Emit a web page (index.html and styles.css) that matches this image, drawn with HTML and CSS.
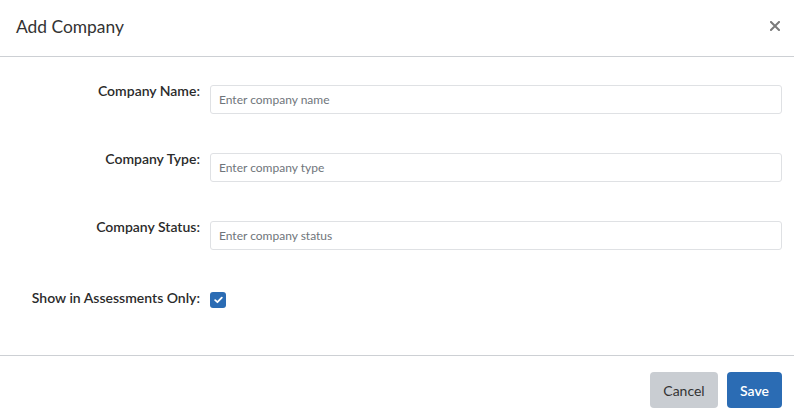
FILE: index.html
```html
<!DOCTYPE html>
<html>
<head>
<meta charset="utf-8">
<link rel="stylesheet" href="styles.css">
</head>
<body>
<div class="modal">
  <div class="modal-header">
    <h1 class="title">Add Company</h1>
    <button class="close" aria-label="Close">
      <svg width="10" height="10" viewBox="0 0 10 10"><path d="M1 1L9 9M9 1L1 9" stroke="#7a7a7a" stroke-width="2" stroke-linecap="square"/></svg>
    </button>
  </div>
  <div class="modal-body">
    <div class="row">
      <label class="label">Company Name:</label>
      <input class="input" type="text" placeholder="Enter company name">
    </div>
    <div class="row">
      <label class="label">Company Type:</label>
      <input class="input" type="text" placeholder="Enter company type">
    </div>
    <div class="row">
      <label class="label">Company Status:</label>
      <input class="input" type="text" placeholder="Enter company status">
    </div>
    <div class="row row-check">
      <label class="label">Show in Assessments Only:</label>
      <span class="checkbox">
        <svg width="9" height="8" viewBox="0 0 9 8"><path d="M1.2 4.2L3.4 6.2L7.8 1.6" fill="none" stroke="#fff" stroke-width="1.8" stroke-linecap="round" stroke-linejoin="round"/></svg>
      </span>
    </div>
  </div>
  <div class="modal-footer">
    <button class="btn btn-cancel">Cancel</button>
    <button class="btn btn-save">Save</button>
  </div>
</div>
</body>
</html>
```

FILE: styles.css
```css
* { box-sizing: border-box; }
html, body {
  margin: 0;
  padding: 0;
  background: #fff;
  font-family: Lato, "Liberation Sans", sans-serif;
  color: #333;
}
.modal {
  width: 794px;
  height: 420px;
  display: flex;
  flex-direction: column;
}
.modal-header {
  height: 57px;
  border-bottom: 1px solid #cdd0d4;
  display: flex;
  align-items: center;
  justify-content: space-between;
  padding: 0 12px 0 16px;
}
.title {
  margin: 0;
  font-size: 17.4px;
  font-weight: 400;
  color: #333;
  margin-top: -3px;
}
.close {
  background: none;
  border: 0;
  padding: 0;
  width: 14px;
  height: 14px;
  display: flex;
  align-items: center;
  justify-content: center;
  margin-top: -4px;
}
.modal-body {
  height: 299px;
  border-bottom: 1px solid #cdd0d4;
  padding: 28px 12px 0 0;
  display: flex;
  flex-direction: column;
  gap: 39px;
}
.row {
  display: flex;
  align-items: flex-start;
}
.label {
  width: 210px;
  padding-right: 10px;
  text-align: right;
  font-size: 14px;
  font-weight: 600;
  line-height: 17px;
  margin-top: -3px;
  color: #2b2b2b;
}
.input {
  flex: 1;
  height: 29px;
  border: 1px solid #dfe1e4;
  border-radius: 3px;
  padding: 0 8px;
  font-family: Lato, "Liberation Sans", sans-serif;
  font-size: 12px;
  color: #333;
  outline: none;
}
.input::placeholder {
  color: #6f757b;
}
.row-check .label {
  margin-top: 0;
}
.checkbox {
  margin-top: 3px;
  width: 16px;
  height: 16px;
  border-radius: 3px;
  background: #2b6cb4;
  display: flex;
  align-items: center;
  justify-content: center;
}
.modal-footer {
  flex: 1;
  display: flex;
  justify-content: flex-end;
  align-items: flex-start;
  padding: 16px 12px 0 0;
  gap: 9px;
}
.btn {
  height: 36px;
  border: 0;
  border-radius: 4px;
  font-family: Lato, "Liberation Sans", sans-serif;
  font-size: 14px;
  padding: 0 12px;
}
.btn-cancel {
  background: #c9cdd2;
  color: #333;
  width: 68px;
}
.btn-save {
  background: #2b6cb4;
  color: #fff;
  font-weight: 600;
  width: 55px;
}
```
